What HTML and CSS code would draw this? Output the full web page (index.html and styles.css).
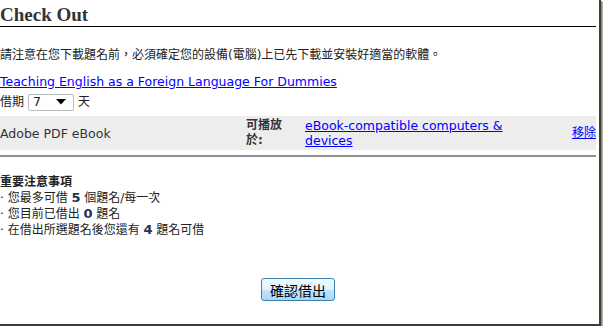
FILE: index.html
```html
<!DOCTYPE html>
<html lang="zh-Hant">
<head>
<meta charset="utf-8">
<title>Check Out</title>
<link rel="stylesheet" href="styles.css">
</head>
<body>
<div class="frame">
  <div class="page">
    <h1 class="title">Check Out</h1>
    <p class="notice">請注意在您下載題名前，必須確定您的設備(電腦)上已先下載並安裝好適當的軟體。</p>
    <p class="book"><a href="#">Teaching English as a Foreign Language For Dummies</a></p>
    <div class="loan">
      <span>借期</span>
      <span class="select"><span class="select-val">7</span><svg class="select-arrow" width="10" height="6" viewBox="0 0 10 6"><path d="M0 0 H10 L5 5.5 Z" fill="#000"/></svg></span>
      <span>天</span>
    </div>
    <div class="format-row">
      <div class="fmt-name">Adobe PDF eBook</div>
      <div class="fmt-label">可播放於:</div>
      <div class="fmt-devices"><a href="#">eBook-compatible computers &amp; devices</a></div>
      <div class="fmt-remove"><a href="#">移除</a></div>
    </div>
    <div class="rule"></div>
    <div class="notes">
      <div class="notes-head">重要注意事項</div>
      <div>· 您最多可借 <b class="num">5</b> 個題名/每一次</div>
      <div>· 您目前已借出 <b class="num">0</b> 題名</div>
      <div>· 在借出所選題名後您還有 <b class="num">4</b> 題名可借</div>
    </div>
    <div class="actions">
      <button class="confirm" type="button">確認借出</button>
    </div>
  </div>
</div>
</body>
</html>
```
FILE: styles.css
```css
html, body {
  margin: 0;
  padding: 0;
  background: #ffffff;
}

body {
  font-family: "DejaVu Sans", "Noto Sans CJK TC", sans-serif;
  font-size: 12px;
  color: #222;
}

.frame {
  width: 599px;
  height: 324px;
  border-right: 2px solid #3e3e3e;
  border-bottom: 2px solid #3e3e3e;
  box-shadow: 1px 1px 0 #8a8a7a, 2px 2px 0 #b4b4a0, 3px 3px 0 #d6d6c6;
  background: #fff;
  overflow: hidden;
}

.page {
  padding-right: 3px;
}

a {
  color: #0000ff;
  text-decoration: underline;
}

.title {
  margin: 0;
  padding-top: 4px;
  font-family: "Liberation Serif", serif;
  font-weight: bold;
  font-size: 19px;
  line-height: 22px;
  color: #333;
  border-bottom: 1px solid #000;
}

.notice {
  margin: 20px 0 0;
  line-height: 16px;
  font-size: 12px;
}

.book {
  margin: 11px 0 0;
  line-height: 16px;
  font-size: 12.5px;
}

.loan {
  margin-top: 2px;
  height: 20px;
  display: flex;
  align-items: center;
  gap: 4px;
  line-height: 16px;
}

.select {
  display: flex;
  align-items: center;
  justify-content: space-between;
  width: 44px;
  height: 15px;
  border: 1px solid #b9bec6;
  border-radius: 2px;
  padding: 0;
  box-sizing: content-box;
}

.select-val {
  padding-left: 4px;
  font-size: 12.5px;
}

.select-arrow {
  margin-right: 7px;
}

.format-row {
  margin-top: 4px;
  background: #ededed;
  display: grid;
  grid-template-columns: 246px 59px 246px 1fr;
  align-items: center;
  padding: 2px 0;
  line-height: 15px;
  color: #333;
}

.fmt-name {
  font-size: 12.5px;
}

.fmt-label {
  font-weight: bold;
  padding-right: 14px;
  color: #333;
}

.fmt-devices {
  padding-right: 10px;
  font-size: 12.5px;
}

.fmt-remove {
  text-align: right;
}

.rule {
  margin-top: 5px;
  height: 0;
  border-top: 2px solid #8f8f8f;
}

.notes {
  margin-top: 18px;
  line-height: 15px;
  color: #222;
}

.notes-head {
  font-weight: bold;
}

.num {
  color: #1f3358;
  font-size: 13px;
}

.actions {
  margin-top: 40px;
  display: flex;
  justify-content: center;
}

.confirm {
  width: 74px;
  height: 23px;
  padding: 0;
  border: 1px solid #3c7fb1;
  border-radius: 3px;
  background: linear-gradient(to bottom, #f0f9ff 0%, #dff2fd 50%, #c3e5fb 51%, #a9d8f5 100%);
  font-family: "Noto Sans CJK TC", sans-serif;
  font-size: 14px;
  line-height: 20px;
  color: #000;
  cursor: pointer;
}
```
